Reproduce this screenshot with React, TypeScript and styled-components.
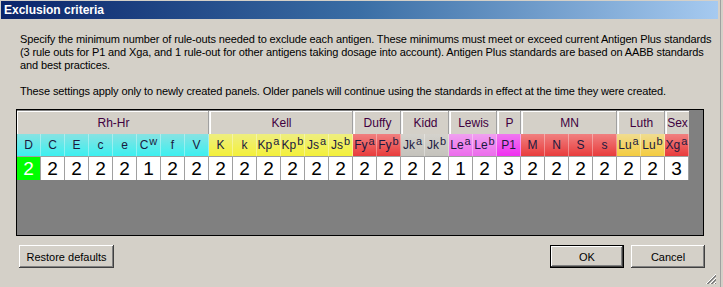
import { styled, createGlobalStyle } from 'styled-components';

const GlobalStyle = createGlobalStyle`
  html, body {
    margin: 0;
    padding: 0;
    background: #d4d0c8;
    overflow: hidden;
  }
`;

type Antigen = { base: string; sup?: string; value: number; tone: string; active?: boolean };
type Group = { name: string; items: Antigen[] };

const tones: Record<string, string> = {
  rh: 'linear-gradient(#88e2e2, #3cf0f0)',
  kell: 'linear-gradient(#eeee80, #f4f03a)',
  red: 'linear-gradient(#f08080, #e83c3c)',
  kidd: 'linear-gradient(#d4d2cc, #c4c2bc)',
  lewis: 'linear-gradient(#f0a0f0, #ec6cec)',
  p: 'linear-gradient(#f078f0, #f030f0)',
  luth: 'linear-gradient(#f0dc90, #f4cc40)',
};

const groups: Group[] = [
  {
    name: 'Rh-Hr',
    items: [
      { base: 'D', value: 2, tone: 'rh', active: true },
      { base: 'C', value: 2, tone: 'rh' },
      { base: 'E', value: 2, tone: 'rh' },
      { base: 'c', value: 2, tone: 'rh' },
      { base: 'e', value: 2, tone: 'rh' },
      { base: 'C', sup: 'w', value: 1, tone: 'rh' },
      { base: 'f', value: 2, tone: 'rh' },
      { base: 'V', value: 2, tone: 'rh' },
    ],
  },
  {
    name: 'Kell',
    items: [
      { base: 'K', value: 2, tone: 'kell' },
      { base: 'k', value: 2, tone: 'kell' },
      { base: 'Kp', sup: 'a', value: 2, tone: 'kell' },
      { base: 'Kp', sup: 'b', value: 2, tone: 'kell' },
      { base: 'Js', sup: 'a', value: 2, tone: 'kell' },
      { base: 'Js', sup: 'b', value: 2, tone: 'kell' },
    ],
  },
  {
    name: 'Duffy',
    items: [
      { base: 'Fy', sup: 'a', value: 2, tone: 'red' },
      { base: 'Fy', sup: 'b', value: 2, tone: 'red' },
    ],
  },
  {
    name: 'Kidd',
    items: [
      { base: 'Jk', sup: 'a', value: 2, tone: 'kidd' },
      { base: 'Jk', sup: 'b', value: 2, tone: 'kidd' },
    ],
  },
  {
    name: 'Lewis',
    items: [
      { base: 'Le', sup: 'a', value: 1, tone: 'lewis' },
      { base: 'Le', sup: 'b', value: 2, tone: 'lewis' },
    ],
  },
  { name: 'P', items: [{ base: 'P1', value: 3, tone: 'p' }] },
  {
    name: 'MN',
    items: [
      { base: 'M', value: 2, tone: 'red' },
      { base: 'N', value: 2, tone: 'red' },
      { base: 'S', value: 2, tone: 'red' },
      { base: 's', value: 2, tone: 'red' },
    ],
  },
  {
    name: 'Luth',
    items: [
      { base: 'Lu', sup: 'a', value: 2, tone: 'luth' },
      { base: 'Lu', sup: 'b', value: 2, tone: 'luth' },
    ],
  },
  { name: 'Sex', items: [{ base: 'Xg', sup: 'a', value: 3, tone: 'red' }] },
];

const antigens = groups.flatMap((g) => g.items);

export default function App() {
  return (
    <>
      <GlobalStyle />
      <Screen>
        <Dialog>
          <TitleBar>Exclusion criteria</TitleBar>
          <Body>
            <Info $gap={13}>
              Specify the minimum number of rule-outs needed to exclude each antigen. These minimums must meet or exceed current Antigen Plus standards
              <br />
              (3 rule outs for P1 and Xga, and 1 rule-out for other antigens taking dosage into account). Antigen Plus standards are based on AABB standards
              <br />
              and best practices.
            </Info>
            <Info $gap={11}>
              These settings apply only to newly created panels. Older panels will continue using the standards in effect at the time they were created.
            </Info>
            <GridBox>
              <Table>
                {groups.map((g, i) => (
                  <GroupCell key={g.name} $span={g.items.length} $first={i === 0}>
                    {g.name}
                  </GroupCell>
                ))}
                {antigens.map((a, i) => (
                  <AntigenCell key={'h' + i} $bg={tones[a.tone]}>
                    {a.base}
                    {a.sup && <Sup>{a.sup}</Sup>}
                  </AntigenCell>
                ))}
                {antigens.map((a, i) => (
                  <ValueCell key={'v' + i} $active={!!a.active}>
                    {a.value}
                  </ValueCell>
                ))}
              </Table>
            </GridBox>
            <ButtonRow>
              <Button $w={95}>Restore defaults</Button>
              <Spacer />
              <Button $w={74} $default>OK</Button>
              <Button $w={74}>Cancel</Button>
            </ButtonRow>
          </Body>
          <Grip>
            <svg width="12" height="12" viewBox="0 0 12 12">
              {[0, 4, 8].map((o) => (
                <g key={o}>
                  <line x1={11} y1={1 + o} x2={1 + o} y2={11} stroke="#ffffff" strokeWidth="1" />
                  <line x1={11} y1={2 + o} x2={2 + o} y2={11} stroke="#808080" strokeWidth="1" />
                  <line x1={11} y1={3 + o} x2={3 + o} y2={11} stroke="#808080" strokeWidth="1" />
                </g>
              ))}
            </svg>
          </Grip>
        </Dialog>
        <Behind>
          <BehindEdge />
        </Behind>
      </Screen>
    </>
  );
}

const Screen = styled.div`
  display: flex;
  width: 723px;
  height: 287px;
  background: #d4d0c8;
  font-family: 'Liberation Sans', Arial, sans-serif;
`;

const Dialog = styled.div`
  position: relative;
  width: 718px;
  height: 287px;
  background: #d4d0c8;
  display: flex;
  flex-direction: column;
  box-sizing: border-box;
  padding-top: 1px;
`;

const TitleBar = styled.div`
  height: 18px;
  margin: 0 0 0 1px;
  padding-left: 3px;
  background: linear-gradient(to right, #0a246a, #3a6ea5 50%, #a6caf0);
  color: #ffffff;
  font-family: 'Liberation Sans', Arial, sans-serif;
  font-weight: bold;
  font-size: 12px;
  line-height: 18px;
`;

const Body = styled.div`
  display: flex;
  flex-direction: column;
  padding: 14px 14px 0 16px;
`;

const Info = styled.p<{ $gap: number }>`
  margin: 0 0 ${(p) => p.$gap}px 4px;
  font-family: 'Liberation Sans', Arial, sans-serif;
  font-size: 11px;
  line-height: 13px;
  color: #000000;
  white-space: nowrap;
  letter-spacing: -0.12px;
`;

const GridBox = styled.div`
  width: 688px;
  height: 127px;
  box-sizing: border-box;
  border: 1px solid #000000;
  background: #808080;
  padding-top: 1px;
`;

const Table = styled.div`
  display: grid;
  grid-template-columns: repeat(28, 24px);
  grid-template-rows: 23px 23px 23px;
`;

const GroupCell = styled.div<{ $span: number; $first: boolean }>`
  grid-column: span ${(p) => p.$span};
  background: #d4d0c8;
  border-top: 1px solid #ffffff;
  border-left: 1px solid ${(p) => (p.$first ? '#ffffff' : '#f4f4f4')};
  box-shadow: ${(p) => (p.$first ? 'none' : 'inset 1px 0 0 #ffffff, -1px 0 0 #a0a0a0')};
  display: flex;
  align-items: center;
  justify-content: center;
  font-family: 'Liberation Sans', Arial, sans-serif;
  font-size: 12px;
  color: #400040;
`;

const AntigenCell = styled.div<{ $bg: string }>`
  background: ${(p) => p.$bg};
  border-right: 1px solid rgba(255, 255, 255, 0.35);
  border-bottom: 1px solid #a0a0a0;
  box-sizing: border-box;
  display: flex;
  align-items: center;
  justify-content: center;
  font-family: 'Liberation Sans', Arial, sans-serif;
  font-size: 12px;
  color: #1a1a40;
`;

const Sup = styled.span`
  font-size: 11px;
  position: relative;
  top: -4px;
  margin-left: 1px;
`;

const ValueCell = styled.div<{ $active: boolean }>`
  background: ${(p) => (p.$active ? '#00ff00' : '#ffffff')};
  color: ${(p) => (p.$active ? '#ffffff' : '#000000')};
  border-right: 1px solid #a0a0a0;
  box-sizing: border-box;
  display: flex;
  align-items: center;
  justify-content: center;
  font-family: 'Liberation Sans', Arial, sans-serif;
  font-size: 19px;
  line-height: 22px;
`;

const ButtonRow = styled.div`
  display: flex;
  gap: 7px;
  margin-top: 9px;
  padding-left: 3px;
  width: 686px;
`;

const Spacer = styled.div`
  flex: 1;
`;

const Button = styled.button<{ $w: number; $default?: boolean }>`
  width: ${(p) => p.$w}px;
  height: 23px;
  padding: 0;
  background: #d4d0c8;
  font-family: 'Liberation Sans', Arial, sans-serif;
  font-size: 11px;
  color: #000000;
  box-sizing: border-box;
  border: ${(p) => (p.$default ? '1px solid #000000' : 'none')};
  box-shadow: inset -1px -1px 0 #404040, inset 1px 1px 0 #ffffff, inset -2px -2px 0 #808080;
`;

const Grip = styled.div`
  position: absolute;
  right: 1px;
  bottom: 2px;
  width: 12px;
  height: 12px;
  line-height: 0;
`;

const Behind = styled.div`
  flex: 1;
  display: flex;
  background: #d4d0c8;
`;

const BehindEdge = styled.div`
  margin-left: 2px;
  width: 1px;
  background: #a0a0a0;
`;
